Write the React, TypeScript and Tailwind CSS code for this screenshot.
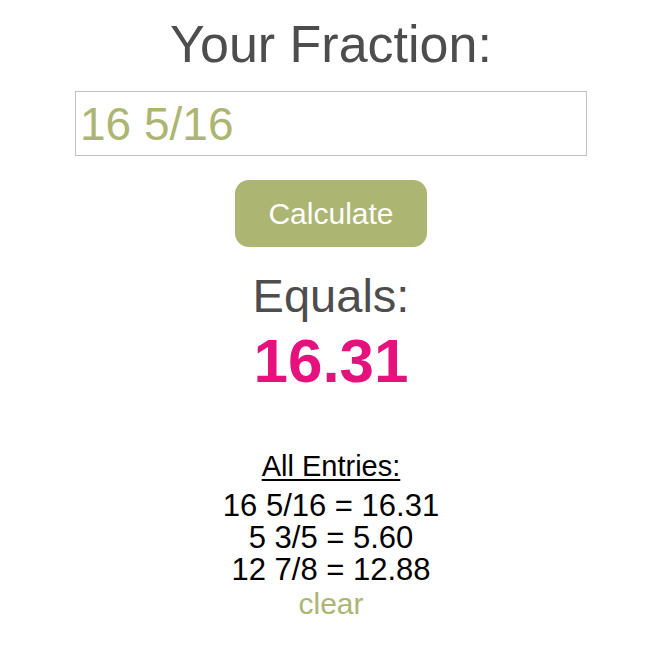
export default function App() {
  const entries = ['16 5/16 = 16.31', '5 3/5 = 5.60', '12 7/8 = 12.88'];

  return (
    <div className="min-h-[648px] bg-white flex flex-col items-center font-['Liberation_Sans',Arial,sans-serif]">
      <h1 className="pt-[18px] text-[52px] leading-none text-[#4d4d4d]">Your Fraction:</h1>

      <div className="mt-[21px] w-[512px] h-[65px] border border-[#c0c0c0] flex items-center px-[4px]">
        <span className="text-[46px] leading-none text-[#adb573]">16 5/16</span>
      </div>

      <button className="mt-[24px] w-[192px] h-[67px] rounded-[14px] bg-[#adb573] text-white text-[30px] leading-none">
        Calculate
      </button>

      <div className="mt-[25px] text-[47px] leading-none text-[#4d4d4d]">Equals:</div>
      <div className="mt-[11px] text-[62px] leading-none font-bold text-[#e5127d]">16.31</div>

      {/* Entries */}
      <div className="mt-[60px] text-[29px] leading-none text-black underline underline-offset-[3px]">
        All Entries:
      </div>
      <div className="mt-[9px] flex flex-col items-center text-[31px] leading-[32px] text-black">
        {entries.map((e) => (
          <div key={e}>{e}</div>
        ))}
      </div>
      <div className="mt-[3px] text-[30px] leading-[30px] text-[#adb573]">clear</div>
    </div>
  );
}
